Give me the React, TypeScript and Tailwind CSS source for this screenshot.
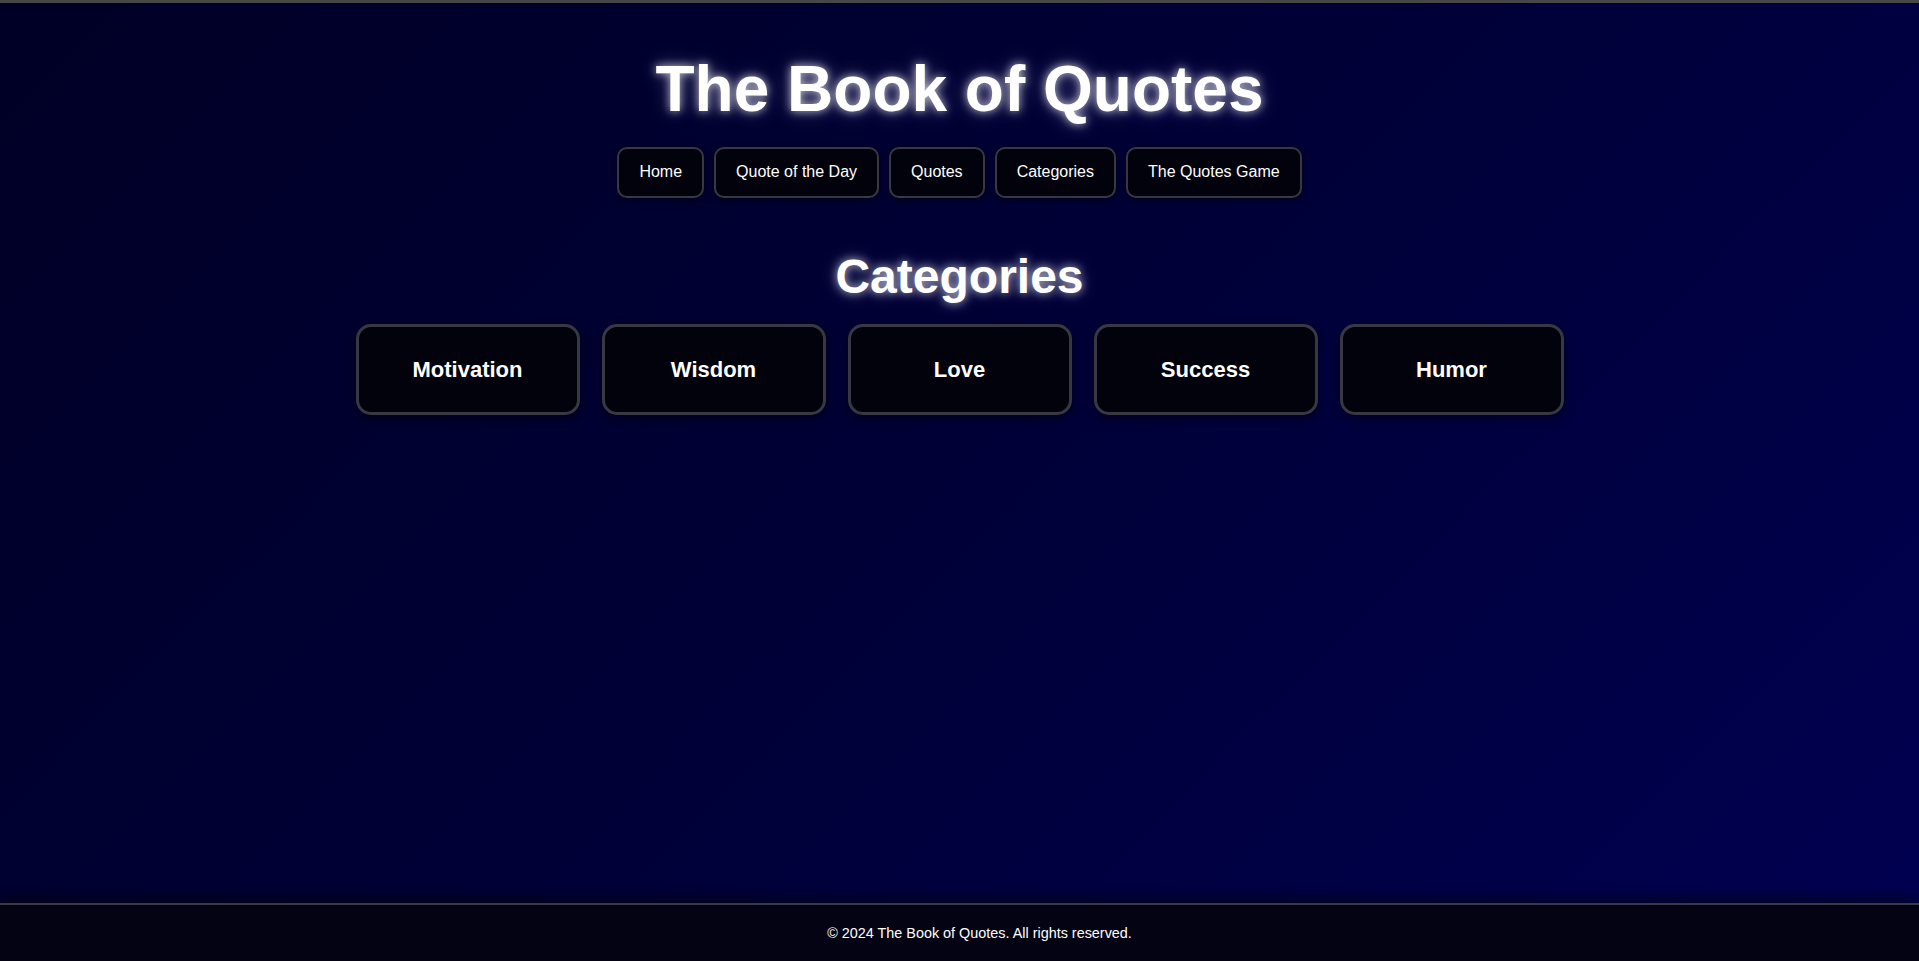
import React from "react";

const NAV_LINKS = ["Home", "Quote of the Day", "Quotes", "Categories", "The Quotes Game"];
const CATEGORIES = ["Motivation", "Wisdom", "Love", "Success", "Humor"];

export default function App() {
  return (
    <div className="flex min-h-screen flex-col border-t-[3px] border-[#474747] bg-[linear-gradient(135deg,#000026_0%,#000038_50%,#000052_100%)] font-['Liberation_Sans',Arial,sans-serif] text-white">
      {/* Header */}
      <header className="pt-[50px] text-center">
        <h1 className="text-[64px] font-bold leading-[1.15] [text-shadow:0_0_10px_rgba(255,255,255,0.75),0_0_20px_rgba(200,200,255,0.35)]">
          The Book of Quotes
        </h1>
        <nav className="mt-[20px] flex justify-center gap-[10px]">
          {NAV_LINKS.map((link) => (
            <a
              key={link}
              href="#"
              className="rounded-[10px] border-2 border-[#383842] bg-[#02020c] px-5 py-[14.5px] text-[16px] leading-[1.15] text-white shadow-[0_2px_8px_rgba(0,0,0,0.5)]"
            >
              {link}
            </a>
          ))}
        </nav>
      </header>

      {/* Categories */}
      <main className="flex-1 pt-[51px] text-center">
        <h2 className="text-[48px] font-bold leading-[1.15] [text-shadow:0_0_10px_rgba(255,255,255,0.7),0_0_18px_rgba(200,200,255,0.3)]">
          Categories
        </h2>
        <div className="mt-[20px] flex justify-center gap-[22px]">
          {CATEGORIES.map((cat) => (
            <div
              key={cat}
              className="flex h-[91px] w-[224px] items-center justify-center rounded-[15px] border-[3px] border-[#383842] bg-[#02020c] text-[22px] font-bold shadow-[0_4px_12px_rgba(0,0,0,0.45)]"
            >
              {cat}
            </div>
          ))}
        </div>
      </main>

      {/* Footer */}
      <footer className="border-t-2 border-[#393945] bg-[#030314] py-5 pl-10 text-center text-[14.4px] leading-[16px] text-white shadow-[0_-6px_12px_rgba(0,0,0,0.45)]">
        © 2024 The Book of Quotes. All rights reserved.
      </footer>
    </div>
  );
}
